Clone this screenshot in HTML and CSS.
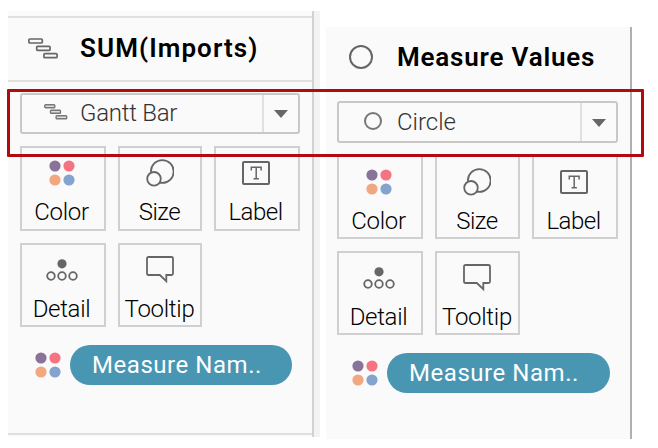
FILE: index.html
```html
<!DOCTYPE html>
<html lang="en">
<head>
<meta charset="utf-8">
<title>Marks cards</title>
<link rel="stylesheet" href="styles.css">
</head>
<body>
<svg class="defs" width="0" height="0">
  <symbol id="gantt" viewBox="0 0 30 21"><g fill="none" stroke="#666" stroke-width="1.7"><rect x=".9" y="1" width="13.4" height="4" rx="1"/><rect x="8.7" y="8.3" width="13.4" height="4" rx="1"/><rect x="15.9" y="15.7" width="13.2" height="4" rx="1"/></g></symbol>
  <symbol id="gantt-small" viewBox="0 0 24 16"><g fill="#ddd" stroke="#777" stroke-width="1.4"><rect x=".8" y=".8" width="10" height="3" rx=".8"/><rect x="6.5" y="6.3" width="10" height="3" rx=".8"/><rect x="12.1" y="11.7" width="10.6" height="3" rx=".8"/></g></symbol>
  <symbol id="color" viewBox="0 0 26 26"><circle cx="6" cy="6" r="5.6" fill="#8a7399"/><circle cx="20" cy="6" r="5.6" fill="#f57482"/><circle cx="6" cy="20" r="5.6" fill="#f1a77f"/><circle cx="20" cy="20" r="5.6" fill="#84a4cd"/></symbol>
  <symbol id="size" viewBox="0 0 28 28"><g fill="#fafafa" stroke="#666" stroke-width="1.8"><circle cx="16.3" cy="12.5" r="11.4"/><circle cx="8" cy="19.8" r="6.8"/></g></symbol>
  <symbol id="label" viewBox="0 0 28 24"><rect x="1" y="1" width="26" height="22" rx="1" fill="none" stroke="#666" stroke-width="2"/><path d="M9.3 9.500V6.300h9.800v3.200M14.200 6.300v11.400M11.500 17.700h5.400" fill="none" stroke="#666" stroke-width="1.5"/></symbol>
  <symbol id="detail" viewBox="0 0 32 22"><circle cx="16" cy="4.8" r="4.6" fill="#666"/><g fill="none" stroke="#666" stroke-width="1.8"><circle cx="5" cy="17" r="3.8"/><circle cx="16" cy="17" r="3.8"/><circle cx="27" cy="17" r="3.8"/></g></symbol>
  <symbol id="tooltip" viewBox="0 0 28 28"><path d="M2.5 1h23q1.500 0 1.500 1.500v15q0 1.500-1.500 1.500H20.300v6.200L13.800 19H2.500Q1 19 1 17.500v-15Q1 1 2.500 1z" fill="none" stroke="#666" stroke-width="1.8"/></symbol>
</svg>
<main class="cards">
  <section class="card card-left">
    <header class="head"><svg class="i-gantt"><use href="#gantt"/></svg><h2 class="title title-sum">SUM(Imports)</h2></header>
    <div class="select"><svg class="i-gantt-small"><use href="#gantt-small"/></svg><span class="value value-gantt">Gantt Bar</span><span class="drop"></span></div>
    <div class="tiles">
      <div class="tile"><svg class="i-color"><use href="#color"/></svg><span class="t-color">Color</span></div>
      <div class="tile"><svg class="i-size"><use href="#size"/></svg><span class="t-size">Size</span></div>
      <div class="tile"><svg class="i-label"><use href="#label"/></svg><span class="t-label">Label</span></div>
      <div class="tile"><svg class="i-detail"><use href="#detail"/></svg><span class="t-detail">Detail</span></div>
      <div class="tile"><svg class="i-tooltip"><use href="#tooltip"/></svg><span class="t-tooltip">Tooltip</span></div>
    </div>
    <div class="field"><svg class="i-dots"><use href="#color"/></svg><span class="pill">Measure Nam..</span></div>
  </section>
  <section class="card card-right">
    <header class="head"><span class="ring"></span><h2 class="title title-values">Measure Values</h2></header>
    <div class="select"><span class="ring ring-small"></span><span class="value value-circle">Circle</span><span class="drop"></span></div>
    <div class="tiles">
      <div class="tile"><svg class="i-color"><use href="#color"/></svg><span class="t-color">Color</span></div>
      <div class="tile"><svg class="i-size"><use href="#size"/></svg><span class="t-size">Size</span></div>
      <div class="tile"><svg class="i-label"><use href="#label"/></svg><span class="t-label">Label</span></div>
      <div class="tile"><svg class="i-detail"><use href="#detail"/></svg><span class="t-detail">Detail</span></div>
      <div class="tile"><svg class="i-tooltip"><use href="#tooltip"/></svg><span class="t-tooltip">Tooltip</span></div>
    </div>
    <div class="field"><svg class="i-dots"><use href="#color"/></svg><span class="pill">Measure Nam..</span></div>
  </section>
</main>
<div class="highlight"></div>
</body>
</html>
```
FILE: styles.css
```css
* { box-sizing: border-box; }
body { margin: 0; width: 658px; height: 448px; overflow: hidden; background: #fff; font-family: Roboto, "Liberation Sans", sans-serif; position: relative; }
.defs { position: absolute; }
svg { display: block; flex: none; }
.cards { display: flex; align-items: flex-start; padding-left: 8px; gap: 6px; }
.card { background: #fafafa; }
.card-left { width: 312px; height: 426px; margin-top: 11px; padding: 5px 6px 0 0; display: flow-root; background: linear-gradient(#e0e0e0, #e0e0e0) 0 422px / 304px 2px no-repeat, linear-gradient(90deg, #fafafa 304px, #d2d2d2 304px, #d2d2d2 306px, #f3f3f3 306px); }
.card-right { width: 306px; height: 412px; margin-top: 27px; border-right: 2px solid #b0b0b0; }
.head { display: flex; align-items: center; }
.card-left .head { width: 304px; height: 66px; border-top: 2px solid #e0e0e0; border-bottom: 2px solid #e0e0e0; padding-left: 20px; }
.card-right .head { height: 60px; padding-left: 23px; }
.i-gantt { width: 30px; height: 21px; margin-right: 22px; margin-bottom: 2px; }
.title { margin: 0; font-size: 26px; font-weight: 600; line-height: 30px; white-space: nowrap; color: #000; }
.title-sum { letter-spacing: 1.1px; margin-bottom: 2px; }
.title-values { letter-spacing: .8px; }
.ring { width: 24px; height: 24px; border: 2px solid #666; border-radius: 50%; margin-right: 24px; flex: none; }
.ring-small { width: 18px; height: 18px; border-color: #777; margin: 0 15px 3px 0; }
.select { display: flex; align-items: center; width: 280px; height: 41px; margin: 11px 0 0 12px; border: 2px solid #c8c8c8; border-radius: 3px; padding-left: 22px; background: #fafafa; }
.card-right .select { width: 281px; height: 42px; margin: 14px 0 0 11px; padding-left: 25px; }
.i-gantt-small { width: 24px; height: 16px; margin: 0 12px 3px 0; }
.value { font-size: 24px; font-weight: 300; line-height: 30px; color: #333; white-space: nowrap; }
.value-gantt { letter-spacing: -.25px; margin-bottom: 1px; }
.drop { align-self: stretch; width: 36px; margin-left: auto; border-left: 2px solid #e0e0e0; display: flex; align-items: center; justify-content: center; }
.drop::after { content: ""; border: 7px solid transparent; border-top: 8px solid #666; border-bottom: 0; margin-top: 1px; }
.tiles { display: grid; grid-template-columns: 86px 84px 86px; grid-template-rows: 85px 84px; gap: 12px; margin: 12px 0 0 12px; }
.card-right .tiles { grid-template-columns: 86px 85px 86px; grid-template-rows: 84px 84px; margin: 12px 0 0 11px; }
.tile { border: 2px solid #d0d0d0; padding-right: 3px; display: grid; grid-template-rows: 49px 30px; justify-items: center; align-items: center; font-size: 24px; font-weight: 300; line-height: 30px; letter-spacing: -.3px; color: #000; white-space: nowrap; }
.tile:nth-child(3n + 2) { padding-right: 1px; }
.t-size, .t-label { letter-spacing: -.5px; }
.i-color, .i-dots { width: 26px; height: 26px; }
.i-size { width: 28px; height: 28px; }
.i-label { width: 28px; height: 24px; }
.i-detail { width: 32px; height: 22px; }
.i-tooltip { width: 28px; height: 28px; }
.field { display: flex; align-items: center; margin: 18px 0 0 26px; }
.i-dots { margin: 0 -.5px 1px .5px; }
.card-right .field { margin-left: 25px; }
.pill { width: 222px; height: 40px; margin-left: 10px; border-radius: 20px; padding-left: 22px; background: #4996b2; color: #fff; font-size: 24px; line-height: 40px; letter-spacing: .55px; white-space: nowrap; }
.card-right .pill { width: 223px; }
.highlight { position: absolute; left: 7px; top: 89px; width: 637px; height: 68px; border: 3px solid #b20a0e; border-radius: 1px; }
```
